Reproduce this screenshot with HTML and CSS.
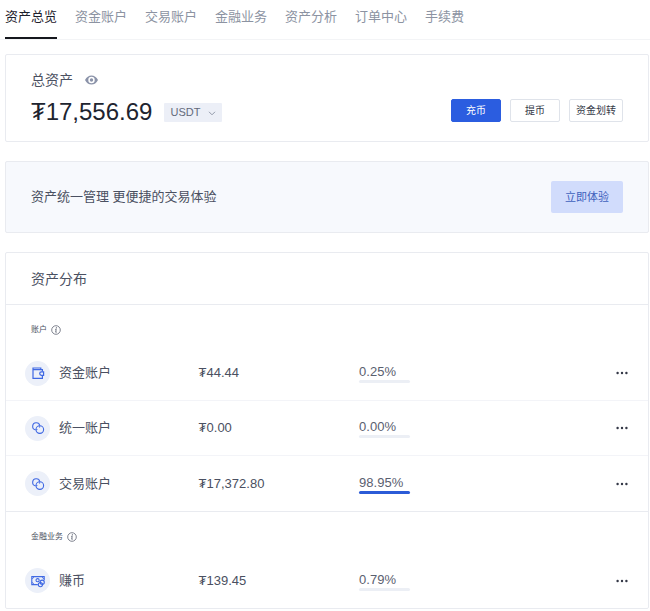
FILE: index.html
```html
<!DOCTYPE html>
<html lang="zh-CN">
<head>
<meta charset="utf-8">
<meta name="viewport" content="width=device-width, initial-scale=1">
<title>资产总览</title>
<link rel="stylesheet" href="styles.css">
</head>
<body>
<svg class="sprite" aria-hidden="true">
  <symbol id="info" viewBox="0 0 10 10">
    <circle cx="5" cy="5" r="4.3" fill="none" stroke="currentColor" stroke-width="0.7"/>
    <path d="M4.2 4.3h1L4.7 7.2h1" fill="none" stroke="currentColor" stroke-width="0.8"/>
    <circle cx="5.4" cy="2.8" r="0.6" fill="currentColor"/>
  </symbol>
  <symbol id="rings" viewBox="0 0 14 14">
    <g fill="none" stroke="currentColor" stroke-width="1.1">
      <path d="M4.6 8.9A3.6 3.6 0 1 1 8.8 4.7"/>
      <circle cx="8.8" cy="8.6" r="3.8"/>
      <path d="M5.2 8.8Q5.8 8.8 6.4 8.4M8.7 5.2Q8.7 5.8 8.4 6.4"/>
    </g>
  </symbol>
  <symbol id="wallet" viewBox="0 0 14 14">
    <g fill="none" stroke="currentColor" stroke-width="1.2">
      <path d="M11.4 5.6V3.6H2V12.3H11.4V9.6M2 4V2H9.8V3.6"/>
      <path d="M12.6 5.9h-2.2a1.7 1.7 0 0 0 0 3.4h2.2z"/>
    </g>
  </symbol>
  <symbol id="earn" viewBox="0 0 14 14">
    <g fill="none" stroke="currentColor" stroke-width="1.1">
      <path d="M6.8 10.6H.8V2.6H13.2V6.2"/>
      <path d="M.8 4.8Q2.6 4.6 2.8 2.6M.8 8.4Q2.6 8.6 2.8 10.6M13.2 4.8Q11.4 4.6 11.2 2.6" stroke-width="0.8"/>
      <circle cx="6.6" cy="6.2" r="1.6"/>
      <circle cx="11.2" cy="8.2" r="2.1"/>
      <circle cx="9.4" cy="10.6" r="2.1"/>
    </g>
  </symbol>
  <symbol id="dots" viewBox="0 0 12 4">
    <circle cx="1.6" cy="2" r="1.2"/><circle cx="6" cy="2" r="1.2"/><circle cx="10.4" cy="2" r="1.2"/>
  </symbol>
</svg>

<nav class="tabs">
  <a class="tab tab-active" href="#overview" aria-current="page">资产总览</a>
  <a class="tab" href="#funding">资金账户</a>
  <a class="tab" href="#trading">交易账户</a>
  <a class="tab" href="#finance">金融业务</a>
  <a class="tab" href="#analysis">资产分析</a>
  <a class="tab" href="#orders">订单中心</a>
  <a class="tab" href="#fees">手续费</a>
</nav>

<main class="content">
  <section class="card total">
    <div>
      <div class="total-head">
        <h1 class="title">总资产</h1>
        <button class="eye" type="button" aria-label="隐藏资产">
          <svg viewBox="0 0 13 10" width="13" height="10"><path fill="currentColor" fill-rule="evenodd" d="M0 5Q2.4.4 6.5.4T13 5Q10.6 9.6 6.5 9.6T0 5ZM6.5 1.8a3.2 3.2 0 1 0 0 6.4a3.2 3.2 0 0 0 0-6.4Z"/><circle cx="6.5" cy="5" r="1.7" fill="currentColor"/></svg>
        </button>
      </div>
      <div class="total-line">
        <span class="amount">₮17,556.69</span>
        <div class="currency">
          <select class="currency-select" aria-label="计价货币"><option>USDT</option></select>
          <svg class="chevron" viewBox="0 0 8 5" width="8" height="5"><path d="M1 .8 4 3.8 7 .8" fill="none" stroke="currentColor"/></svg>
        </div>
      </div>
    </div>
    <div class="actions">
      <button class="btn btn-primary" type="button">充币</button>
      <button class="btn" type="button">提币</button>
      <button class="btn" type="button">资金划转</button>
    </div>
  </section>

  <section class="card promo">
    <p class="promo-text">资产统一管理 更便捷的交易体验</p>
    <button class="btn-try" type="button">立即体验</button>
  </section>

  <section class="card">
    <h2 class="title card-head">资产分布</h2>
    <table class="accounts">
      <colgroup><col class="col-name"><col class="col-value"><col><col class="col-more"></colgroup>
      <tbody>
        <tr><th class="group" colspan="4" scope="rowgroup"><span class="group-label">账户 <svg width="10" height="10"><use href="#info"/></svg></span></th></tr>
        <tr class="row">
          <th scope="row"><span class="name"><span class="badge"><svg width="14" height="14"><use href="#wallet"/></svg></span>资金账户</span></th>
          <td>₮44.44</td>
          <td><div class="share">0.25%<div class="bar"></div></div></td>
          <td><button class="more" type="button" aria-label="更多"><svg width="12" height="4"><use href="#dots"/></svg></button></td>
        </tr>
        <tr class="row">
          <th scope="row"><span class="name"><span class="badge"><svg width="14" height="14"><use href="#rings"/></svg></span>统一账户</span></th>
          <td>₮0.00</td>
          <td><div class="share">0.00%<div class="bar"></div></div></td>
          <td><button class="more" type="button" aria-label="更多"><svg width="12" height="4"><use href="#dots"/></svg></button></td>
        </tr>
        <tr class="row">
          <th scope="row"><span class="name"><span class="badge"><svg width="14" height="14"><use href="#rings"/></svg></span>交易账户</span></th>
          <td>₮17,372.80</td>
          <td><div class="share">98.95%<div class="bar"><div class="bar-fill" style="width:98.95%"></div></div></div></td>
          <td><button class="more" type="button" aria-label="更多"><svg width="12" height="4"><use href="#dots"/></svg></button></td>
        </tr>
      </tbody>
      <tbody>
        <tr><th class="group" colspan="4" scope="rowgroup"><span class="group-label">金融业务 <svg width="10" height="10"><use href="#info"/></svg></span></th></tr>
        <tr class="row">
          <th scope="row"><span class="name"><span class="badge"><svg width="14" height="14"><use href="#earn"/></svg></span>赚币</span></th>
          <td>₮139.45</td>
          <td><div class="share">0.79%<div class="bar"></div></div></td>
          <td><button class="more" type="button" aria-label="更多"><svg width="12" height="4"><use href="#dots"/></svg></button></td>
        </tr>
      </tbody>
    </table>
  </section>
</main>
</body>
</html>
```

FILE: styles.css
```css
* { box-sizing: border-box; }

body {
  margin: 0;
  background: #fff;
  color: #4a5061;
  font: 13px/20px "Liberation Sans", "Noto Sans CJK SC", sans-serif;
}

h1, h2, p { margin: 0; }
svg { display: block; }
button { font: inherit; color: inherit; cursor: pointer; }
.sprite { display: none; }

.tabs {
  display: flex;
  gap: 18px;
  height: 40px;
  padding-left: 5px;
  border-bottom: 1px solid #f3f4f6;
}
.tab {
  height: 39px;
  padding-top: 7px;
  color: #8c93a2;
  text-decoration: none;
  white-space: nowrap;
}
.tab-active {
  color: #1c202b;
  border-bottom: 2px solid #15171d;
}

.content {
  display: grid;
  gap: 19px;
  padding: 14px 1px 0 5px;
}
.card {
  border: 1px solid #e9ebf0;
  border-radius: 2px;
}
.title {
  font-size: 14px;
  line-height: 20px;
  font-weight: 400;
}

.total {
  display: flex;
  justify-content: space-between;
  height: 88px;
  padding: 15px 25px;
}
.total-head {
  display: flex;
  align-items: center;
  gap: 12px;
}
.eye, .more {
  padding: 0;
  border: 0;
  background: none;
}
.eye { color: #8b93a9; }
.total-line {
  display: flex;
  align-items: center;
  gap: 12px;
  margin-top: 7px;
}
.amount {
  font-size: 24px;
  line-height: 30px;
  color: #20242f;
}
.currency { position: relative; }
.currency-select {
  display: block;
  width: 58px;
  height: 19px;
  padding: 0 6px;
  border: 0;
  border-radius: 1px;
  appearance: none;
  background: #eceff7;
  color: #636a7b;
  font: 11px/19px "Liberation Sans", sans-serif;
}
.chevron {
  position: absolute;
  top: 8px;
  right: 6px;
  color: #9299a9;
  pointer-events: none;
}

.actions {
  display: flex;
  align-items: center;
  gap: 9px;
  padding-top: 25px;
}
.btn {
  min-width: 50px;
  height: 23px;
  padding: 0 6px;
  border: 1px solid #dfe3ea;
  border-radius: 2px;
  background: #fff;
  color: #343947;
  font-size: 10px;
  line-height: 20px;
}
.btn-primary {
  border-color: #2b5de0;
  background: #2b5de0;
  color: #fff;
}

.promo {
  display: flex;
  align-items: center;
  justify-content: space-between;
  height: 72px;
  padding: 0 25px;
  background: #f7f9fd;
}
.btn-try {
  height: 32px;
  padding: 0 14px;
  border: 0;
  border-radius: 2px;
  background: #d1dcfc;
  color: #3f61bd;
  font-size: 11px;
}

.card-head {
  padding: 16px 25px 15px;
  border-bottom: 1px solid #e9ebf0;
}

.accounts {
  width: 100%;
  table-layout: fixed;
  border-collapse: separate;
  border-spacing: 0;
}
.col-name { width: 30%; }
.col-value { width: 25%; }
.col-more { width: 38px; }
.accounts th, .accounts td {
  padding: 0;
  font-weight: 400;
  text-align: left;
}
.accounts .group {
  height: 41px;
  padding: 9px 0 0 25px;
}
.group-label {
  display: flex;
  align-items: center;
  gap: 4px;
  font-size: 8px;
  line-height: 16px;
}
.row > * {
  height: 55px;
  border-bottom: 1px solid #f3f4f8;
}
tbody .row:last-child > * {
  height: 56px;
  border-bottom-color: #e9ebf0;
}
tbody:last-child .row:last-child > * {
  height: 55px;
  border-bottom: 0;
}
.name {
  display: flex;
  align-items: center;
  gap: 9px;
  padding-left: 19px;
}
.badge {
  display: grid;
  place-items: center;
  width: 25px;
  height: 25px;
  border-radius: 50%;
  background: #ecf0f9;
  color: #3f68e3;
}
.share {
  line-height: 17px;
  color: #5a606f;
}
.bar {
  width: 51px;
  height: 3px;
  border-radius: 2px;
  background: #eceff5;
}
.bar-fill {
  height: 100%;
  border-radius: 2px;
  background: #2b5bd7;
}
.more {
  display: block;
  padding: 6px;
  fill: #343846;
}
```
